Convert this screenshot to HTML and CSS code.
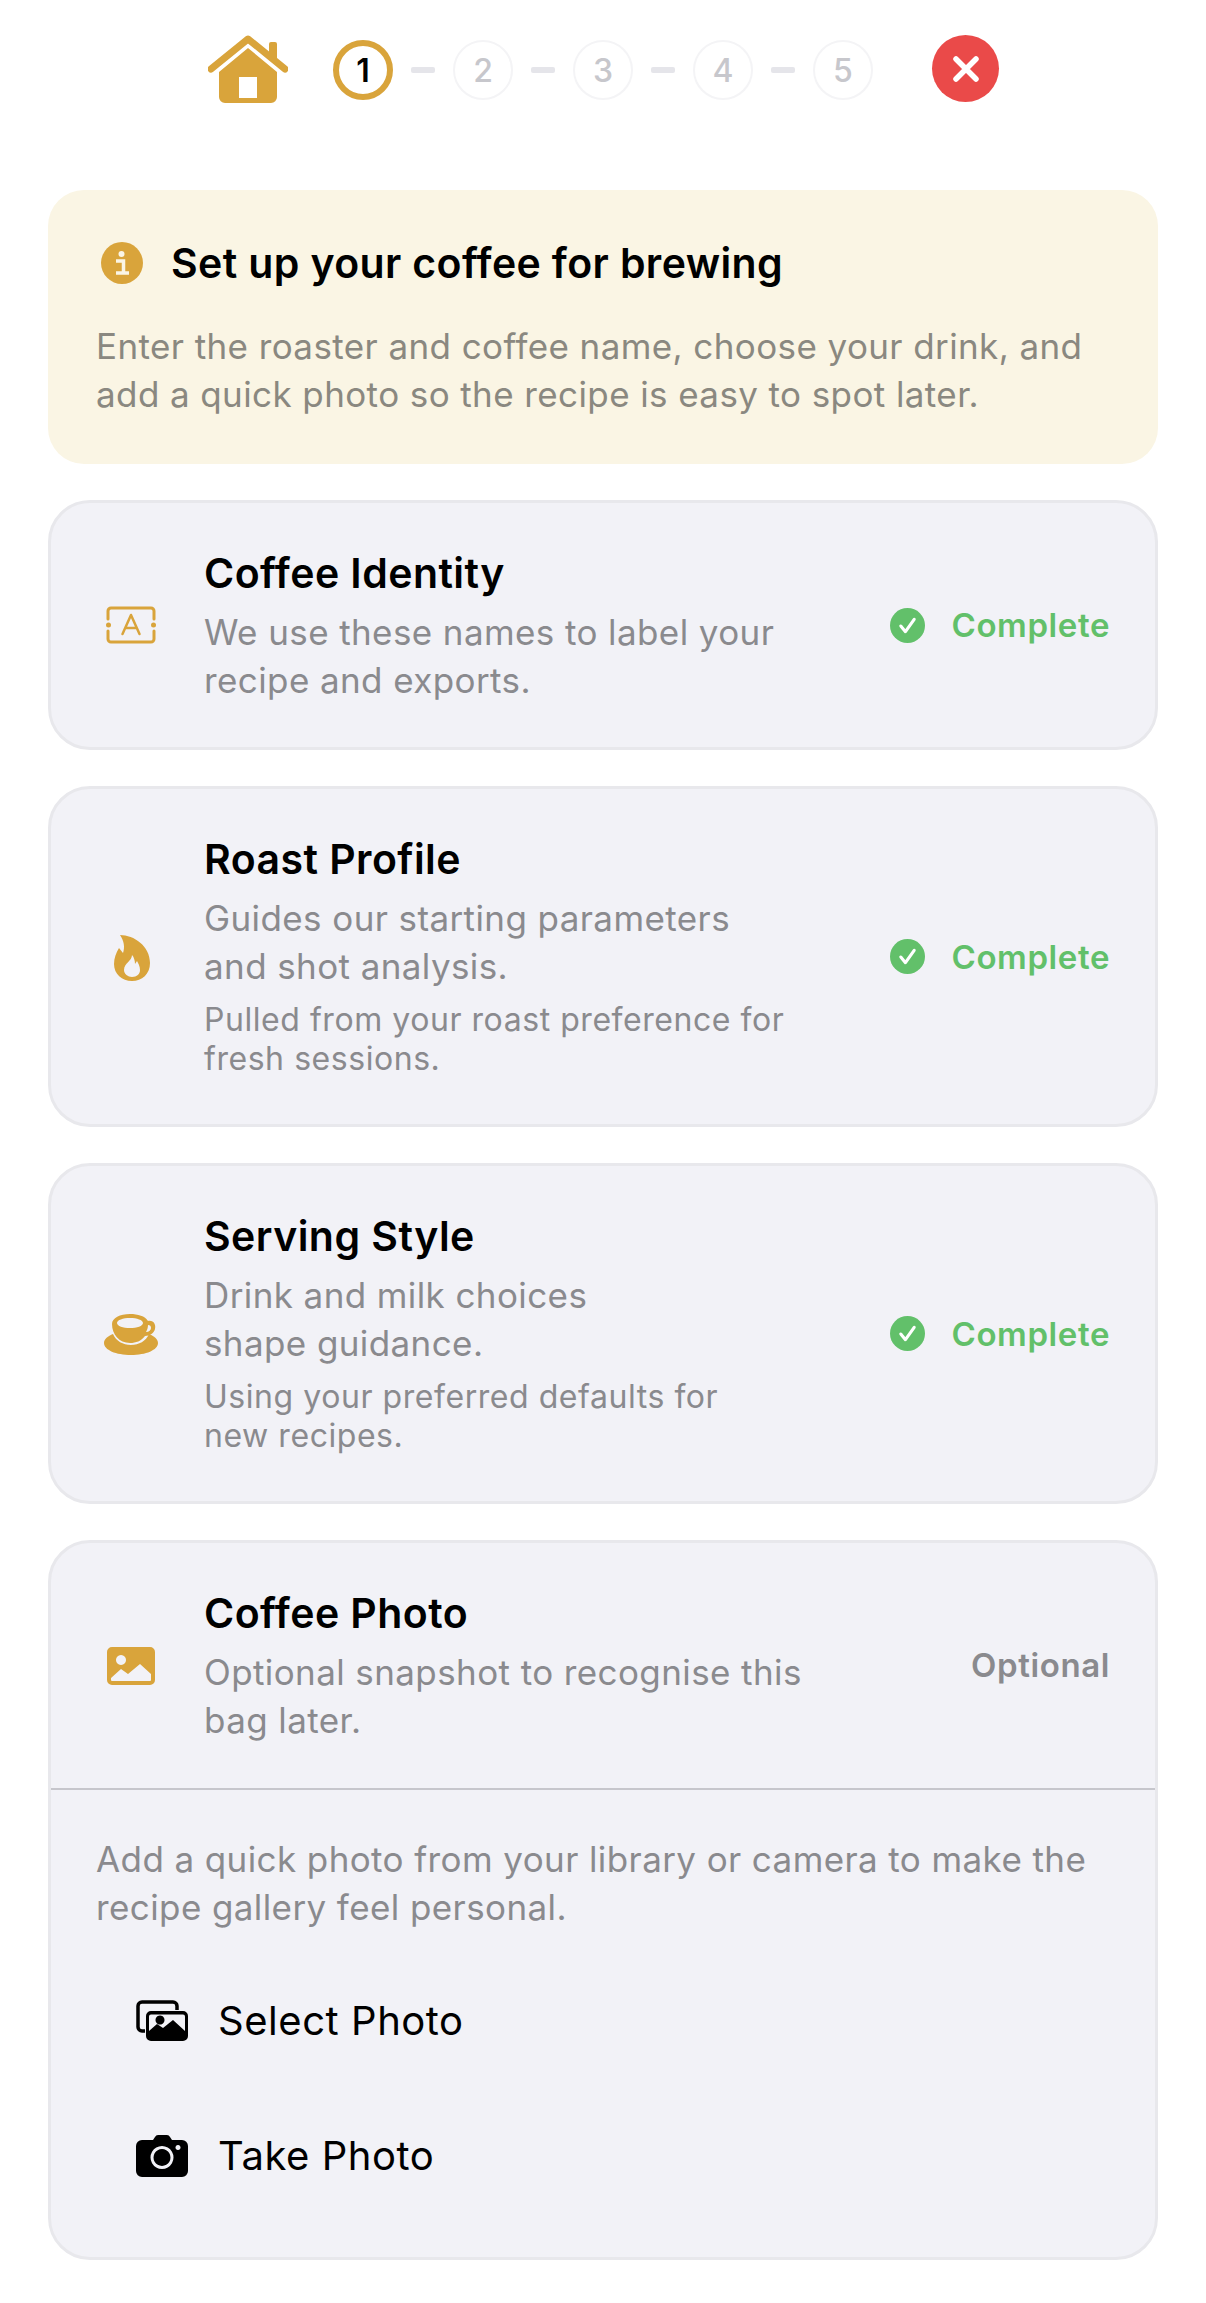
FILE: index.html
```html
<!doctype html>
<html>
    <head>
        <title>Set up your coffee</title>
        <link rel="stylesheet" href="styles.css">
    </head>
    <body>
        <!-- Top bar with steps -->
        <div class="topbar">
            <svg class="home-icon" viewBox="0 0 80 70">
                <path d="M3 34 L40 4 L77 34" fill="none" stroke="#d9a43b" stroke-width="7" stroke-linecap="round" stroke-linejoin="round"/>
                <path d="M61 20 V9 a2 2 0 0 1 2-2 h4 a2 2 0 0 1 2 2 V26 Z" fill="#d9a43b"/>
                <path fill-rule="evenodd" d="M40 13 L69 37 V62 a6 6 0 0 1-6 6 H17 a6 6 0 0 1-6-6 V37 Z M31 42 V63 H49 V42 Z" fill="#d9a43b"/>
            </svg>
            <div class="steps">
                <div class="step step-active">1</div>
                <div class="dash"></div>
                <div class="step">2</div>
                <div class="dash"></div>
                <div class="step">3</div>
                <div class="dash"></div>
                <div class="step">4</div>
                <div class="dash"></div>
                <div class="step">5</div>
            </div>
            <div class="close-btn">
                <svg viewBox="0 0 30 30" width="30" height="30">
                    <path d="M5 5 L25 25 M25 5 L5 25" stroke="#fff" stroke-width="5.5" stroke-linecap="round"/>
                </svg>
            </div>
        </div>

        <div class="banner">
            <div class="banner-head">
                <svg class="info-icon" viewBox="0 0 42 42">
                    <circle cx="21" cy="21" r="21" fill="#d9a43b"/>
                    <circle cx="20.500" cy="12" r="3" fill="#faf5e6"/>
                    <path d="M15 19 H22.500 V30 M15 31 H28" fill="none" stroke="#faf5e6" stroke-width="3.500"/>
                </svg>
                <div class="banner-title">Set up your coffee for brewing</div>
            </div>
            <div class="banner-text">Enter the roaster and coffee name, choose your drink, and<br>add a quick photo so the recipe is easy to spot later.</div>
        </div>

        <div class="card">
            <div class="row">
                <div class="row-icon">
                    <svg class="label-icon" viewBox="0 0 50 38" width="50" height="38">
                        <path d="M2 13 V5 a3 3 0 0 1 3-3 H45 a3 3 0 0 1 3 3 V13 M2 25 V33 a3 3 0 0 0 3 3 H45 a3 3 0 0 0 3-3 V25" fill="none" stroke="#d9a43b" stroke-width="3" stroke-linecap="round"/>
                        <circle cx="2.500" cy="19" r="2.500" fill="#d9a43b"/>
                        <circle cx="47.500" cy="19" r="2.500" fill="#d9a43b"/>
                        <path d="M16.500 28 L25 9 L33.500 28 M19.500 22 H30.500" fill="none" stroke="#d9a43b" stroke-width="2.500" stroke-linecap="round" stroke-linejoin="round"/>
                    </svg>
                </div>
                <div class="row-body">
                    <div class="row-title">Coffee Identity</div>
                    <div class="row-text">We use these names to label your<br>recipe and exports.</div>
                </div>
                <div class="status">
                    <svg class="check-icon" viewBox="0 0 34 34">
                        <circle cx="17" cy="17" r="17" fill="#62c06a"/>
                        <path d="M10.500 17.500 L15 23 L23.500 11" fill="none" stroke="#fff" stroke-width="3" stroke-linecap="round" stroke-linejoin="round"/>
                    </svg>
                    <span>Complete</span>
                </div>
            </div>
        </div>

        <div class="card">
            <div class="row">
                <div class="row-icon">
                    <svg viewBox="-2 0 38 46" width="38" height="46">
                        <path fill-rule="evenodd" d="M6 0 C20 0 36 11 36 28 C36 39 28 46 18 46 C8 46 0 39 0 29 C0 23 2 18 5 13 L9 18 C11 12 10 6 6 0 Z M18 20 C18 26 10 28 10 35 C10 39 14 42 18 42 C23 42 26 39 26 35 C26 31 24 28 23 26 L21 29 C21 26 20 22 18 20 Z" fill="#d9a43b"/>
                    </svg>
                </div>
                <div class="row-body">
                    <div class="row-title">Roast Profile</div>
                    <div class="row-text">Guides our starting parameters<br>and shot analysis.</div>
                    <div class="row-note">Pulled from your roast preference for<br>fresh sessions.</div>
                </div>
                <div class="status">
                    <svg class="check-icon" viewBox="0 0 34 34">
                        <circle cx="17" cy="17" r="17" fill="#62c06a"/>
                        <path d="M10.500 17.500 L15 23 L23.500 11" fill="none" stroke="#fff" stroke-width="3" stroke-linecap="round" stroke-linejoin="round"/>
                    </svg>
                    <span>Complete</span>
                </div>
            </div>
        </div>

        <div class="card">
            <div class="row">
                <div class="row-icon">
                    <svg viewBox="0 0 54 42" width="54" height="42">
                        <path d="M9 20 C4 22 0 25 0 29 C0 36 12 41 27 41 C42 41 54 36 54 29 C54 25 50 22 45 20 C42 27 35 31 27 31 C19 31 12 27 9 20 Z" fill="#d9a43b"/>
                        <path fill-rule="evenodd" d="M8 10 C8 4 16 0 26 0 C34 0 41 2 44 7 C50 6 52 11 51 15 C50 19 46 22 41 22 C37 27 32 29 26 29 C15 29 8 20 8 10 Z M13 9 C13 12 19 14 26 14 C33 14 39 12 39 9 C39 6 33 4 26 4 C19 4 13 6 13 9 Z M44 11 C44 14 43 16 42 18 C45 18 47 16 47 14 C47 12 46 11 44 11 Z" fill="#d9a43b"/>
                    </svg>
                </div>
                <div class="row-body">
                    <div class="row-title">Serving Style</div>
                    <div class="row-text">Drink and milk choices<br>shape guidance.</div>
                    <div class="row-note">Using your preferred defaults for<br>new recipes.</div>
                </div>
                <div class="status">
                    <svg class="check-icon" viewBox="0 0 34 34">
                        <circle cx="17" cy="17" r="17" fill="#62c06a"/>
                        <path d="M10.500 17.500 L15 23 L23.500 11" fill="none" stroke="#fff" stroke-width="3" stroke-linecap="round" stroke-linejoin="round"/>
                    </svg>
                    <span>Complete</span>
                </div>
            </div>
        </div>

        <div class="card card-last">
            <div class="row row-divided">
                <div class="row-icon">
                    <svg viewBox="0 0 48 38" width="48" height="38">
                        <path fill-rule="evenodd" d="M5 0 H43 a5 5 0 0 1 5 5 V33 a5 5 0 0 1-5 5 H5 a5 5 0 0 1-5-5 V5 a5 5 0 0 1 5-5 Z M14 8 a5 5 0 1 0 0.010 0 Z M4 31 V33 a1 1 0 0 0 1 1 H43 a1 1 0 0 0 1-1 V27 L33 17 L21 27 L14 22 Z" fill="#d9a43b"/>
                    </svg>
                </div>
                <div class="row-body">
                    <div class="row-title">Coffee Photo</div>
                    <div class="row-text">Optional snapshot to recognise this<br>bag later.</div>
                </div>
                <div class="status status-optional"><span>Optional</span></div>
            </div>
            <div class="photo-section">
                <div class="photo-text">Add a quick photo from your library or camera to make the<br>recipe gallery feel personal.</div>
                <div class="photo-action">
                    <svg viewBox="0 0 52 42" width="52" height="42">
                        <path d="M9 31 H6 a4 4 0 0 1-4-4 V6 a4 4 0 0 1 4-4 H37 a4 4 0 0 1 4 4 V10" fill="none" stroke="#000" stroke-width="3.500"/>
                        <path fill-rule="evenodd" d="M15 11 H47 a5 5 0 0 1 5 5 V36 a5 5 0 0 1-5 5 H15 a5 5 0 0 1-5-5 V16 a5 5 0 0 1 5-5 Z M15 14.500 a2 2 0 0 0-2 2 V31 L21 24 L27 28 L37 20 L49 31 V16.500 a2 2 0 0 0-2-2 Z M24 15.500 a4.500 4.500 0 1 0 0.010 0 Z" fill="#000"/>
                    </svg>
                    <span>Select Photo</span>
                </div>
                <div class="photo-action">
                    <svg viewBox="0 0 52 42" width="52" height="42">
                        <path fill-rule="evenodd" d="M17 5 L19 2 a4 4 0 0 1 3-2 H31 a4 4 0 0 1 3 2 L36 5 H46 a6 6 0 0 1 6 6 V36 a6 6 0 0 1-6 6 H6 a6 6 0 0 1-6-6 V11 a6 6 0 0 1 6-6 Z M26 11 a11.500 11.500 0 1 0 0.010 0 Z M26 14 a8.500 8.500 0 1 1-0.010 0 Z M42 10 a2.500 2.500 0 1 0 0.010 0 Z" fill="#000"/>
                    </svg>
                    <span>Take Photo</span>
                </div>
            </div>
        </div>
    </body>
</html>
```

FILE: styles.css
```css
body {
    margin: 0;
    padding: 0 48px;
    background-color: #ffffff;
    font-family: "Inter", "Liberation Sans", sans-serif;
    color: #000;
}

/* Top bar */
.topbar {
    height: 190px;
    padding-top: 35px;
    box-sizing: border-box;
    display: flex;
    align-items: flex-start;
}

.home-icon {
    width: 80px;
    height: 70px;
    margin-left: 160px;
    flex-shrink: 0;
}

.steps {
    display: flex;
    align-items: center;
    gap: 18px;
    margin-left: 45px;
    height: 70px;
}

.step {
    width: 60px;
    height: 60px;
    box-sizing: border-box;
    border: 2px solid #f4f4f6;
    border-radius: 50%;
    display: flex;
    justify-content: center;
    align-items: center;
    font-size: 32px;
    font-weight: 500;
    color: #c7c7cc;
}

.step-active {
    border: 6px solid #d9a43b;
    color: #000;
    font-weight: 600;
}

.dash {
    width: 24px;
    height: 6px;
    border-radius: 2px;
    background-color: #e5e5ea;
}

.close-btn {
    width: 67px;
    height: 67px;
    border-radius: 50%;
    background-color: #ea4a49;
    display: flex;
    justify-content: center;
    align-items: center;
    margin-left: 59px;
}

/* Banner */
.banner {
    background-color: #faf5e4;
    border-radius: 36px;
    height: 274px;
    box-sizing: border-box;
    padding: 48px 48px 0;
    margin-bottom: 36px;
}

.banner-head {
    display: flex;
    align-items: center;
    gap: 28px;
    height: 50px;
}

.info-icon {
    width: 42px;
    height: 42px;
    margin-left: 5px;
}

.banner-title {
    font-size: 41px;
    font-weight: 600;
    letter-spacing: 0.38px;
}

.banner-text {
    margin-top: 34px;
    font-size: 35px;
    line-height: 48px;
    letter-spacing: 0.4px;
    color: #8a8880;
}

/* Cards */
.card {
    background-color: #f2f2f7;
    border: 3px solid #e8e8ec;
    border-radius: 42px;
    margin-bottom: 36px;
}

.card-last {
    margin-bottom: 0;
}

.row {
    display: flex;
    align-items: center;
    padding: 45px 45px 43px 0;
}

.row-divided {
    padding-bottom: 44px;
    border-bottom: 2px solid #c6c6cc;
}

.row-icon {
    width: 153px;
    flex-shrink: 0;
    display: flex;
    justify-content: center;
    padding-left: 7px;
    box-sizing: border-box;
}

.label-icon {
    margin-bottom: 3px;
}

.row-body {
    flex-grow: 1;
}

.row-title {
    font-size: 41px;
    line-height: 50px;
    font-weight: 600;
    letter-spacing: 0.45px;
    margin-bottom: 10px;
}

.row-text {
    font-size: 35px;
    line-height: 48px;
    letter-spacing: 0.4px;
    color: #8a8a8e;
}

.row-note {
    margin-top: 10px;
    margin-bottom: 3px;
    font-size: 32px;
    line-height: 39px;
    letter-spacing: 0.55px;
    color: #8a8a8e;
}

.status {
    display: flex;
    align-items: center;
    gap: 26px;
    margin-bottom: 2px;
    font-size: 33px;
    font-weight: 600;
    letter-spacing: 0.6px;
    color: #62c06a;
    white-space: nowrap;
}

.status-optional {
    color: #8a8a8e;
}

.check-icon {
    width: 35px;
    height: 35px;
}

/* Photo area */
.photo-section {
    padding: 45px 45px 34px;
}

.photo-text {
    font-size: 35px;
    line-height: 48px;
    letter-spacing: 0.4px;
    color: #8a8a8e;
    margin-bottom: 22px;
}

.photo-action {
    display: flex;
    align-items: center;
    gap: 30px;
    height: 135px;
    padding-left: 40px;
    font-size: 40px;
    letter-spacing: 0.55px;
}
```
